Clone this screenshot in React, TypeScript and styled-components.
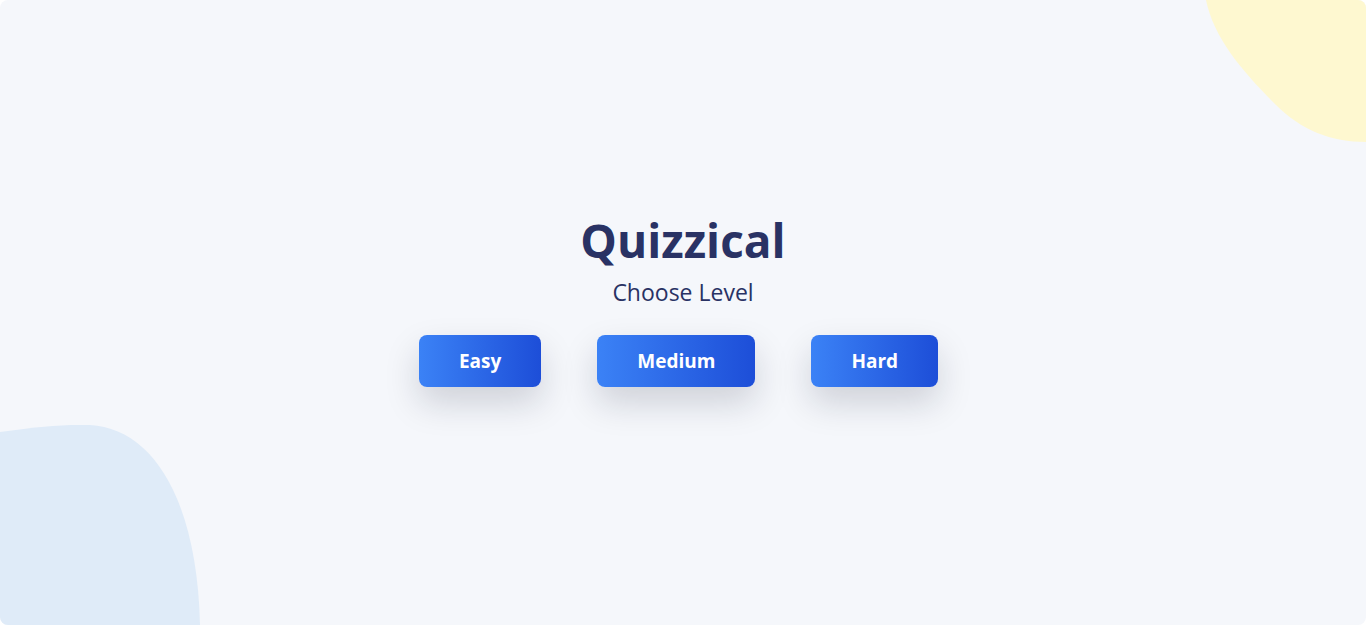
import React from 'react';
import styled, {createGlobalStyle} from "styled-components";

const GlobalStyle = createGlobalStyle`
  html, body {
    margin: 0;
    padding: 0;
    background: #ffffff;
  }
  * {
    box-sizing: border-box;
  }
`

const levels = ['Easy', 'Medium', 'Hard']

export default function App() {
    return (
        <>
            <GlobalStyle/>
            <Page>
                <BlobTop viewBox="0 0 160 142" preserveAspectRatio="none">
                    <path d="M0 0 C8 40, 40 75, 70 105 C95 130, 125 142, 160 142 L160 0 Z" fill="#fef8d0"/>
                </BlobTop>
                <BlobBottom viewBox="0 0 200 200" preserveAspectRatio="none">
                    <path d="M0 7 C30 3, 60 -1, 90 0 C150 3, 197 70, 200 200 L0 200 Z" fill="#dfebf8"/>
                </BlobBottom>

                <Content>
                    <Title>Quizzical</Title>
                    <Subtitle>Choose Level</Subtitle>
                    <Levels>
                        {levels.map(level => (
                            <LevelButton key={level}>{level}</LevelButton>
                        ))}
                    </Levels>
                </Content>
            </Page>
        </>
    );
};

const Page = styled.div`
  position: relative;
  width: 100%;
  height: 625px;
  background-color: #f5f7fb;
  border-radius: 8px;
  overflow: hidden;
  display: flex;
  align-items: center;
  justify-content: center;
  font-family: "Segoe UI", "Open Sans", "Noto Sans", sans-serif;
`

const BlobTop = styled.svg`
  position: absolute;
  top: 0;
  right: 0;
  width: 160px;
  height: 142px;
`

const BlobBottom = styled.svg`
  position: absolute;
  left: 0;
  bottom: 0;
  width: 200px;
  height: 200px;
`

const Content = styled.div`
  position: relative;
  display: flex;
  flex-direction: column;
  align-items: center;
  margin-bottom: 27px;
`

const Title = styled.h1`
  margin: 0 0 9px;
  font-size: 46px;
  font-weight: 700;
  line-height: 56px;
  color: #293264;
`

const Subtitle = styled.p`
  margin: 0 0 28px;
  font-size: 23px;
  line-height: 30px;
  color: #293264;
`

const Levels = styled.div`
  display: flex;
  gap: 56px;
  margin-right: 9px;
`

const LevelButton = styled.button`
  height: 52px;
  padding: 0 40px;
  border: none;
  border-radius: 8px;
  background: linear-gradient(90deg, #3b82f6 0%, #1d4ed8 100%);
  color: #ffffff;
  font-family: inherit;
  font-size: 19px;
  font-weight: 700;
  cursor: pointer;
  box-shadow: 0 16px 34px rgba(20, 25, 45, 0.17);
`
